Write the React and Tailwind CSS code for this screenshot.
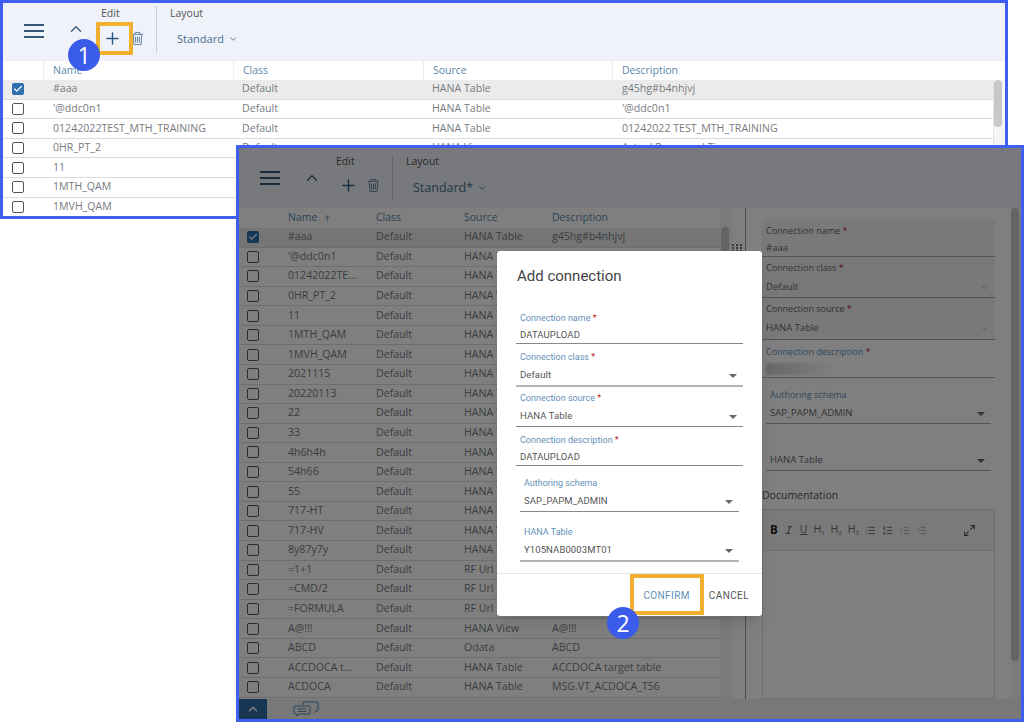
import { ChevronDown, ChevronUp, Italic, List, ListOrdered, Maximize2, Plus, Check, ArrowUp, Outdent, Indent } from "lucide-react";

const topRows = [
  ["#aaa", "Default", "HANA Table", "g45hg#b4nhjvj"],
  ["'@ddc0n1", "Default", "HANA Table", "'@ddc0n1"],
  ["01242022TEST_MTH_TRAINING", "Default", "HANA Table", "01242022 TEST_MTH_TRAINING"],
  ["0HR_PT_2", "Default", "HANA View", "Actual Personnel Time"],
  ["11", "Default", "HANA Table", "11"],
  ["1MTH_QAM", "Default", "HANA Table", "1MTH_QAM"],
  ["1MVH_QAM", "Default", "HANA Table", "1MVH_QAM"],
];

const listRows = [
  ["#aaa", "HANA Table", "g45hg#b4nhjvj"],
  ["'@ddc0n1", "HANA Table", ""],
  ["01242022TE...", "HANA Table", ""],
  ["0HR_PT_2", "HANA View", ""],
  ["11", "HANA Table", ""],
  ["1MTH_QAM", "HANA Table", ""],
  ["1MVH_QAM", "HANA Table", ""],
  ["2021115", "HANA Table", ""],
  ["20220113", "HANA Table", ""],
  ["22", "HANA Table", ""],
  ["33", "HANA Table", ""],
  ["4h6h4h", "HANA Table", ""],
  ["54h66", "HANA Table", ""],
  ["55", "HANA Table", ""],
  ["717-HT", "HANA Table", ""],
  ["717-HV", "HANA View", ""],
  ["8y87y7y", "HANA Table", ""],
  ["=1+1", "RF Url", ""],
  ["=CMD/2", "RF Url", ""],
  ["=FORMULA", "RF Url", ""],
  ["A@!!!", "HANA View", "A@!!!"],
  ["ABCD", "Odata", "ABCD"],
  ["ACCDOCA t...", "HANA Table", "ACCDOCA target table"],
  ["ACDOCA", "HANA Table", "MSG.VT_ACDOCA_T56"],
];

function MenuIcon({ className }) {
  return (
    <svg width="20" height="14" viewBox="0 0 20 14" fill="none" stroke="#34587c" strokeWidth="2" className={className}>
      <path d="M0 1h20M0 7h20M0 13h20" />
    </svg>
  );
}

function TrashIcon({ size }) {
  return (
    <svg width={size} height={size} viewBox="0 0 16 16" fill="none" stroke="#5f7f9c" strokeWidth="1">
      <path d="M2 3.5h12M5.5 3.5V1.5h5v2M3.5 3.5l.7 11h7.6l.7-11M6 6v6.5M8 6v6.5M10 6v6.5" />
    </svg>
  );
}

function CheckBox({ checked }) {
  if (checked) {
    return (
      <div className="w-[12px] h-[12px] rounded-[2px] bg-[#2f6fb0] flex items-center justify-center">
        <Check size={10} strokeWidth={3} className="text-white" />
      </div>
    );
  }
  return <div className="w-[12px] h-[12px] rounded-[2px] border-[1.5px] border-[#555] bg-white"></div>;
}

function Badge({ text, className }) {
  return (
    <div className={`absolute w-[32px] h-[32px] rounded-full bg-[#3b5bea] text-white text-[23px] flex items-center justify-center ${className}`}>
      {text}
    </div>
  );
}

function TopRow({ row, selected }) {
  return (
    <div className={`grid grid-cols-[40px_190px_190px_189px_381px] h-[19.6px] items-center border-b border-[#dcdcdc] text-[10.6px] text-[#777b80] ${selected ? "bg-[#ebebeb]" : "bg-white"}`}>
      <div className="pl-[9px]">
        <CheckBox checked={selected} />
      </div>
      <div className="pl-[10px] whitespace-nowrap">{row[0]}</div>
      <div className="pl-[9px]">{row[1]}</div>
      <div className="pl-[9px]">{row[2]}</div>
      <div className="pl-[10px]">{row[3]}</div>
    </div>
  );
}

function ListRow({ row, selected }) {
  return (
    <div className={`grid grid-cols-[40px_88px_88px_88px_177px] h-[19.57px] items-center border-b border-[#dcdcdc] text-[10.6px] text-[#777b80] ${selected ? "bg-[#ebebeb]" : "bg-white"}`}>
      <div className="pl-[8px]">
        <CheckBox checked={selected} />
      </div>
      <div className="pl-[9px] whitespace-nowrap">{row[0]}</div>
      <div className="pl-[9px]">Default</div>
      <div className="pl-[9px] whitespace-nowrap">{row[1]}</div>
      <div className="pl-[9px] whitespace-nowrap">{row[2]}</div>
    </div>
  );
}

function DialogField({ label, value, required, select, thick, className }) {
  return (
    <div className={`flex flex-col ${className}`}>
      <div className="pl-1 text-[9px] leading-[12px] text-[#5f8fb8]">
        {label}
        {required && <span className="text-[#c0272d]"> *</span>}
      </div>
      <div className={`flex items-center justify-between ${thick ? "h-[24px] border-b-2 border-[#b5b5b5]" : select ? "h-[23px] border-b border-[#888]" : "h-[20px] border-b border-[#888]"} pt-[3px] pl-1 pr-[6px] text-[9.5px] tracking-[0.1px] text-[#555]`}>
        <span>{value}</span>
        {select && <span className="w-0 h-0 border-x-[4px] border-x-transparent border-t-[4px] border-t-[#666]"></span>}
      </div>
    </div>
  );
}

function PanelField({ label, value, required, chevron, caret, shaded, labelBlue, className, blur }) {
  return (
    <div className={`flex flex-col ${shaded ? "bg-[#f2f2f2]" : ""} ${className}`}>
      {label && (
        <div className={`pl-1 text-[9px] leading-[13px] ${labelBlue ? "text-[#5f8fb8]" : "text-[#666]"}`}>
          {label}
          {required && <span className="text-[#c0272d]"> *</span>}
        </div>
      )}
      <div className="flex-1 flex items-center justify-between pt-[3px] pl-1 pr-[6px] text-[9.5px] text-[#666] border-b border-[#aaa]">
        {blur ? <div className="w-[70px] h-[12px] bg-gradient-to-r from-[#cfcfcf] to-transparent blur-[1px]"></div> : <span>{value}</span>}
        {chevron && <ChevronDown size={9} className="text-[#999]" />}
        {caret && <span className="w-0 h-0 border-x-[4px] border-x-transparent border-t-[4px] border-t-[#666]"></span>}
      </div>
    </div>
  );
}

function ToolbarLabel({ children, className }) {
  return <div className={`text-[10.5px] leading-[14px] text-[#555] ${className}`}>{children}</div>;
}

export default function App() {
  return (
    <div className="relative w-[1024px] h-[722px] bg-white overflow-hidden" style={{ fontFamily: '"Open Sans", "Noto Sans", sans-serif' }}>

      {/* back window */}
      <div className="absolute left-0 top-0 w-[1008px] h-[219px] border-[3px] border-[#3f5ff0] bg-white flex flex-col overflow-hidden">
        <div className="h-[58px] bg-[#eff3f9] flex shrink-0">
          <MenuIcon className="ml-[21px] mt-[21px]" />
          <ChevronUp size={18} strokeWidth={2} className="text-[#3f5f80] ml-[23px] mt-[17px]" />
          <div className="w-[56px] ml-[5px] flex flex-col">
            <ToolbarLabel className="mt-[3px] ml-[11px]">Edit</ToolbarLabel>
            <div className="flex items-center gap-[8px] mt-[9px] ml-[13px]">
              <Plus size={19} strokeWidth={1.8} className="text-[#2c5a85]" />
              <TrashIcon size={15} />
            </div>
          </div>
          <div className="w-px h-[47px] bg-[#c6ced6] ml-[10px] mt-[3px]"></div>
          <div className="ml-[13px] flex flex-col">
            <ToolbarLabel className="mt-[3px]">Layout</ToolbarLabel>
            <div className="flex items-center gap-1 mt-[11px] ml-[7px] text-[11px] leading-[16px] text-[#4a6f92]">
              Standard <ChevronDown size={10} />
            </div>
          </div>
        </div>
        <div className="grid grid-cols-[40px_190px_190px_189px_381px] h-[19px] items-center shrink-0 bg-white text-[10.5px] text-[#5a87ad] shadow-[0_1px_2px_rgba(0,0,0,0.25)]">
          <div className="h-full"></div>
          <div className="pl-[9px] h-full border-l border-[#eee] flex items-center">Name</div>
          <div className="pl-[9px] h-full border-l border-[#eee] flex items-center">Class</div>
          <div className="pl-[9px] h-full border-l border-[#eee] flex items-center">Source</div>
          <div className="pl-[9px] h-full border-l border-[#eee] flex items-center">Description</div>
        </div>
        <div className="flex flex-1">
          <div className="w-[990px]">
            {topRows.map((row, index) => (
              <TopRow key={index} row={row} selected={index === 0} />
            ))}
          </div>
          <div className="w-[12px] bg-[#f5f5f5] border-l border-[#e5e5e5]">
            <div className="w-[8px] h-[47px] rounded bg-[#c8c8c8]"></div>
          </div>
        </div>
      </div>

      {/* front window */}
      <div className="absolute left-[236px] top-[145px] w-[788px] h-[577px] border-[3px] border-[#3f5ff0] bg-white flex flex-col overflow-hidden">
        <div className="h-[60px] bg-[#eff3f9] flex shrink-0">
          <MenuIcon className="ml-[21px] mt-[23px]" />
          <ChevronUp size={18} strokeWidth={2} className="text-[#3f5f80] ml-[23px] mt-[21px]" />
          <div className="w-[56px] ml-[4px] flex flex-col">
            <ToolbarLabel className="mt-[6px] ml-[11px]">Edit</ToolbarLabel>
            <div className="flex items-center gap-[8px] mt-[8px] ml-[14px]">
              <Plus size={19} strokeWidth={1.8} className="text-[#2c5a85]" />
              <TrashIcon size={15} />
            </div>
          </div>
          <div className="w-px h-[45px] bg-[#c6ced6] ml-[11px] mt-[7px]"></div>
          <div className="ml-[13px] flex flex-col">
            <ToolbarLabel className="mt-[6px]">Layout</ToolbarLabel>
            <div className="flex items-center gap-1 mt-[11px] ml-[7px] text-[12.5px] leading-[18px] text-[#4a6f92]">
              Standard* <ChevronDown size={10} />
            </div>
          </div>
        </div>

        <div className="flex flex-1 min-h-0">
          <div className="w-[481px] shrink-0">
            <div className="grid grid-cols-[40px_88px_88px_88px_177px] h-[20px] items-center text-[10.5px] text-[#5a87ad] shadow-[0_1px_2px_rgba(0,0,0,0.25)]">
              <div></div>
              <div className="pl-[9px] flex items-center gap-[6px]">Name <ArrowUp size={9} /></div>
              <div className="pl-[9px]">Class</div>
              <div className="pl-[9px]">Source</div>
              <div className="pl-[9px]">Description</div>
            </div>
            {listRows.map((row, index) => (
              <ListRow key={index} row={row} selected={index === 0} />
            ))}
          </div>
          <div className="w-[12px] shrink-0 bg-[#f5f5f5] pt-[19px]">
            <div className="w-[8px] h-[47px] rounded bg-[#c8c8c8] ml-[1px]"></div>
          </div>

          {/* splitter and detail panel */}
          <div className="w-[14px] shrink-0 flex justify-end relative">
            <svg width="10" height="8" viewBox="0 0 10 8" fill="#777" className="absolute left-0 top-[36px]">
              <path d="M0 0h2v2H0zM4 0h2v2H4zM8 0h2v2H8zM0 3h2v2H0zM4 3h2v2H4zM8 3h2v2H8zM0 6h2v2H0zM4 6h2v2H4zM8 6h2v2H8z" />
            </svg>
            <div className="w-px bg-[#999]"></div>
          </div>
          <div className="flex-1 flex min-w-0">
            <div className="flex-1 pl-[16px] pr-[16px] pt-[12px] flex flex-col">
              <PanelField label="Connection name" value="#aaa" required shaded className="h-[37px] pt-[4px] shrink-0" />
              <PanelField label="Connection class" value="Default" required chevron shaded className="h-[41px] pt-[4px] shrink-0" />
              <PanelField label="Connection source" value="HANA Table" required chevron shaded className="h-[42px] pt-[4px] shrink-0" />
              <PanelField label="Connection description" required labelBlue blur className="mt-[5px] h-[33px] shrink-0" />
              <PanelField label="Authoring schema" value="SAP_PAPM_ADMIN" caret labelBlue className="mt-[10px] h-[36px] mx-[4px] shrink-0" />
              <PanelField value="HANA Table" caret className="mt-[24px] h-[23px] mx-[4px] shrink-0" />
              <div className="text-[10.5px] leading-[14px] text-[#555] mt-[17px] shrink-0">Documentation</div>
              <div className="mt-[7px] flex-1 border border-[#ddd] flex flex-col">
                <div className="h-[41px] border-b border-[#ddd] bg-[#f5f5f5] flex items-center pl-[7px] gap-[6px] text-[10.5px] text-[#666] shrink-0">
                  <b className="text-[#222] text-[11.5px]">B</b>
                  <Italic size={10} strokeWidth={2.5} />
                  <u>U</u>
                  <span>H<sub className="text-[6px]">1</sub></span>
                  <span>H<sub className="text-[6px]">2</sub></span>
                  <span>H<sub className="text-[6px]">3</sub></span>
                  <List size={11} />
                  <ListOrdered size={11} />
                  <Indent size={11} className="text-[#aaa]" />
                  <Outdent size={11} className="text-[#aaa]" />
                  <Maximize2 size={13} className="ml-[30px] text-[#555]" />
                </div>
              </div>
            </div>
            <div className="w-[10px] shrink-0 bg-[#f7f7f7]">
              <div className="w-[8px] h-[453px] rounded bg-[#c8c8c8]"></div>
            </div>
          </div>
        </div>

        <div className="h-[20px] bg-[#f0f0f0] flex shrink-0">
          <div className="w-[28px] bg-[#2d6ca8] flex items-center justify-center">
            <ChevronUp size={14} strokeWidth={2.5} className="text-white" />
          </div>
          <svg width="28" height="16" viewBox="0 0 28 16" fill="none" stroke="#5a87ad" strokeWidth="1" className="ml-[26px] mt-[2px]">
            <path d="M2 5h14a1 1 0 0 1 1 1v6a1 1 0 0 1-1 1H6l-2 2v-2H2a1 1 0 0 1-1-1V6a1 1 0 0 1 1-1zM10 4V2a1 1 0 0 1 1-1h13a1 1 0 0 1 1 1v7a1 1 0 0 1-1 1h-1l-2 2M5 8h8M5 10.5h8" />
          </svg>
        </div>
      </div>

      {/* dim layer of the dialog */}
      <div className="absolute left-[239px] top-[148px] w-[782px] h-[571px] bg-black/50"></div>

      {/* dialog */}
      <div className="absolute left-[497px] top-[251px] w-[265px] h-[365px] bg-white rounded-[3px] shadow-lg flex flex-col" style={{ fontFamily: 'Roboto, "Noto Sans", sans-serif' }}>
        <div className="text-[15px] leading-[20px] text-[#444] pl-[20px] pt-[15px]">Add connection</div>
        <div className="flex-1 pl-[19px] pr-[19px] pt-[26px] flex flex-col">
          <DialogField label="Connection name" value="DATAUPLOAD" required className="" />
          <DialogField label="Connection class" value="Default" required select thick className="mt-[7px]" />
          <DialogField label="Connection source" value="HANA Table" required select className="mt-[5px]" />
          <DialogField label="Connection description" value="DATAUPLOAD" required className="mt-[7px]" />
          <DialogField label="Authoring schema" value="SAP_PAPM_ADMIN" select className="mt-[11px] mx-[4px]" />
          <DialogField label="HANA Table" value="Y105NAB0003MT01" select thick className="mt-[14px] mx-[4px]" />
        </div>
        <div className="h-[43px] border-t border-[#e5e5e5] flex items-center justify-end pr-[13px] gap-[19px] text-[10px] tracking-[0.4px]">
          <span className="text-[#5f8fb8]">CONFIRM</span>
          <span className="text-[#555]">CANCEL</span>
        </div>
      </div>

      {/* callouts */}
      <div className="absolute left-[96px] top-[22px] w-[37px] h-[33px] border-4 border-[#f0b030]"></div>
      <Badge text="1" className="left-[68px] top-[39px]" />
      <div className="absolute left-[630px] top-[574px] w-[74px] h-[41px] border-4 border-[#f0b030]"></div>
      <Badge text="2" className="left-[607px] top-[607px]" />
    </div>
  );
}
